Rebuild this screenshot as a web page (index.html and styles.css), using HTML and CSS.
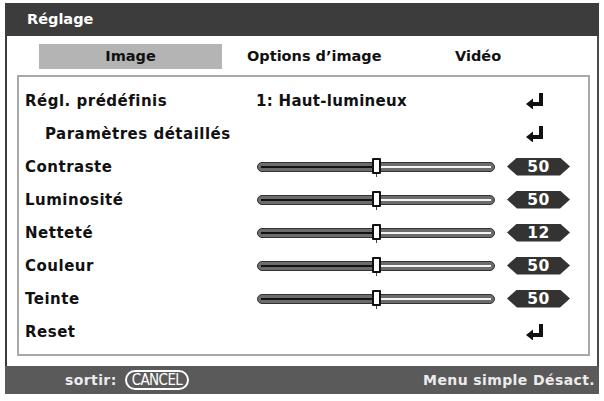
FILE: index.html
```html
<!DOCTYPE html>
<html lang="fr">
<head>
<meta charset="utf-8">
<title>Réglage</title>
<link rel="stylesheet" href="styles.css">
</head>
<body>
<div class="panel">
  <div class="title">Réglage</div>
  <div class="body">
    <div class="tabs">
      <div class="tab active">Image</div>
      <div class="tab t2">Options d’image</div>
      <div class="tab t3">Vidéo</div>
    </div>
    <div class="box">
      <div class="row">
        <div class="label">Régl. prédéfinis</div>
        <div class="value">1: Haut-lumineux</div>
        <div class="end"><svg class="enter" viewBox="0 0 18 17" width="18" height="17"><rect x="13" y="1" width="4" height="13"/><rect x="5" y="10" width="12" height="4"/><polygon points="0,12 7,6.5 7,17.5"/></svg></div>
      </div>
      <div class="row">
        <div class="label sub">Paramètres détaillés</div>
        <div class="value"></div>
        <div class="end"><svg class="enter" viewBox="0 0 18 17" width="18" height="17"><rect x="13" y="1" width="4" height="13"/><rect x="5" y="10" width="12" height="4"/><polygon points="0,12 7,6.5 7,17.5"/></svg></div>
      </div>
      <div class="row">
        <div class="label">Contraste</div>
        <div class="value"><div class="track"><div class="knob"></div></div></div>
        <div class="end"><div class="badge">50</div></div>
      </div>
      <div class="row">
        <div class="label">Luminosité</div>
        <div class="value"><div class="track"><div class="knob"></div></div></div>
        <div class="end"><div class="badge">50</div></div>
      </div>
      <div class="row">
        <div class="label">Netteté</div>
        <div class="value"><div class="track"><div class="knob"></div></div></div>
        <div class="end"><div class="badge">12</div></div>
      </div>
      <div class="row">
        <div class="label">Couleur</div>
        <div class="value"><div class="track"><div class="knob"></div></div></div>
        <div class="end"><div class="badge">50</div></div>
      </div>
      <div class="row">
        <div class="label">Teinte</div>
        <div class="value"><div class="track"><div class="knob"></div></div></div>
        <div class="end"><div class="badge">50</div></div>
      </div>
      <div class="row">
        <div class="label">Reset</div>
        <div class="value"></div>
        <div class="end"><svg class="enter" viewBox="0 0 18 17" width="18" height="17"><rect x="13" y="1" width="4" height="13"/><rect x="5" y="10" width="12" height="4"/><polygon points="0,12 7,6.5 7,17.5"/></svg></div>
      </div>
    </div>
  </div>
  <div class="footer">
    <span class="exit">sortir:</span>
    <span class="cancel">CANCEL</span>
    <span class="simple">Menu simple Désact.</span>
  </div>
</div>
</body>
</html>
```

FILE: styles.css
```css
html, body {
  margin: 0;
  padding: 0;
  background: #ffffff;
}
body {
  font-family: "DejaVu Sans", "Liberation Sans", sans-serif;
  font-weight: bold;
  color: #111111;
}
.panel {
  margin: 3px 0 0 5px;
  width: 594px;
  display: flex;
  flex-direction: column;
}
.title {
  height: 33px;
  line-height: 33px;
  background: #3c3c3c;
  color: #ffffff;
  font-size: 14.5px;
  padding-left: 22px;
}
.body {
  background: #ffffff;
  border-left: 2px solid #3c3c3c;
  border-right: 2px solid #4a4a4a;
  height: 330px;
  display: flex;
  flex-direction: column;
}
.tabs {
  display: flex;
  margin-top: 8px;
  height: 25px;
  font-size: 14.5px;
}
.tab {
  line-height: 25px;
}
.tab.active {
  margin-left: 32px;
  width: 183px;
  background: #b4b4b4;
  text-align: center;
}
.tab.t2 {
  margin-left: 25px;
  width: 208px;
}
.box {
  margin: 6px 7px 0 10px;
  border: 2px solid #a8a8a8;
  padding: 7px 0 0 6px;
  height: 270px;
}
.row {
  display: grid;
  grid-template-columns: 230px 238px 1fr;
  height: 33px;
  align-items: center;
  font-size: 15px;
  letter-spacing: 0.5px;
}
.label.sub {
  padding-left: 20px;
}
.value {
  letter-spacing: 0.3px;
  padding-left: 1px;
}
.end {
  display: flex;
  align-items: center;
}
.enter {
  margin-left: 33px;
  fill: #111111;
  display: block;
}
.track {
  position: relative;
  width: 236px;
  height: 8px;
  margin-left: 1px;
  background: #6c6c6c;
  border: 1px solid #333333;
  border-radius: 5px;
}
.track::before {
  content: "";
  position: absolute;
  left: 3px;
  width: 50%;
  top: 3px;
  height: 2px;
  background: #111111;
}
.track::after {
  content: "";
  position: absolute;
  right: 3px;
  left: 50%;
  top: 3px;
  height: 2px;
  background: #f4f4f4;
}
.knob {
  position: absolute;
  left: 114px;
  top: -5px;
  width: 5px;
  height: 12px;
  background: #ffffff;
  border: 2px solid #111111;
  border-radius: 1px;
  z-index: 1;
}
.knob::after {
  content: "";
  position: absolute;
  left: 2px;
  top: 14px;
  width: 1px;
  height: 3px;
  background: #444444;
}
.badge {
  margin-left: 14px;
  width: 63px;
  height: 18px;
  line-height: 18px;
  background: #333333;
  color: #ffffff;
  text-align: center;
  font-size: 15.5px;
  letter-spacing: 0.5px;
  clip-path: polygon(10px 0, calc(100% - 10px) 0, 100% 50%, calc(100% - 10px) 100%, 10px 100%, 0 50%);
}
.footer {
  height: 28px;
  background: #5a5a5a;
  color: #ececec;
  display: flex;
  align-items: center;
  font-size: 14px;
  letter-spacing: 0.4px;
}
.exit {
  margin-left: 60px;
}
.cancel {
  margin-left: 8px;
  font-weight: normal;
  font-stretch: condensed;
  font-family: "DejaVu Sans Condensed", "DejaVu Sans", sans-serif;
  font-size: 15px;
  letter-spacing: -0.6px;
  color: #ffffff;
  border: 2px solid #ffffff;
  border-radius: 10px;
  height: 16px;
  line-height: 16px;
  padding: 0 5px;
}
.simple {
  margin-left: auto;
  margin-right: 4px;
}
```
